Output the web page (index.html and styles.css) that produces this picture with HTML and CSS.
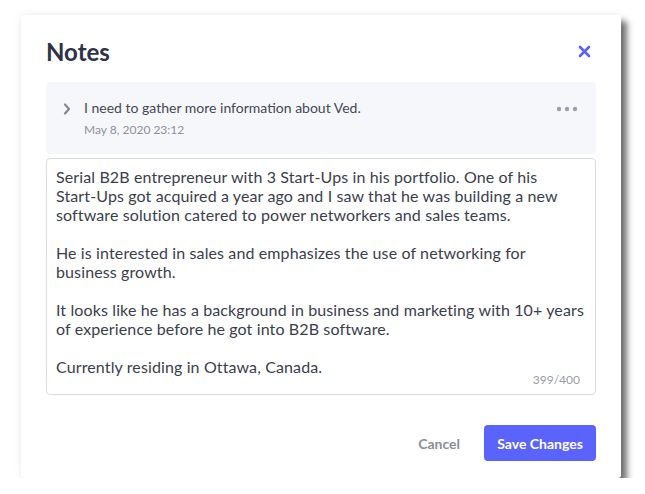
FILE: index.html
```html
<!DOCTYPE html>
<html lang="en">
<head>
    <meta charset="UTF-8">
    <title>Notes</title>
    <link rel="stylesheet" href="styles.css">
</head>
<body>

    <div class="modal">
        <div class="modal-head">
            <h1>Notes</h1>
            <button class="close" aria-label="Close">
                <svg width="13" height="13" viewBox="0 0 13 13">
                    <path d="M2 2L11 11M11 2L2 11" stroke="currentColor" stroke-width="2.6" stroke-linecap="round"/>
                </svg>
            </button>
        </div>

        <div class="note">
            <svg class="chevron" width="8" height="12" viewBox="0 0 8 12">
                <path d="M2 1.5L6 6L2 10.5" fill="none" stroke="currentColor" stroke-width="2.2" stroke-linecap="round" stroke-linejoin="round"/>
            </svg>
            <div class="note-body">
                <div class="note-title">I need to gather more information about Ved.</div>
                <div class="note-date">May 8, 2020 23:12</div>
            </div>
            <svg class="more" width="22" height="6" viewBox="0 0 22 6">
                <circle cx="3" cy="3" r="2.2" fill="currentColor"/>
                <circle cx="11" cy="3" r="2.2" fill="currentColor"/>
                <circle cx="19" cy="3" r="2.2" fill="currentColor"/>
            </svg>
        </div>

        <div class="editor">
            <textarea wrap="off" maxlength="400">Serial B2B entrepreneur with 3 Start-Ups in his portfolio. One of his
Start-Ups got acquired a year ago and I saw that he was building a new
software solution catered to power networkers and sales teams.

He is interested in sales and emphasizes the use of networking for
business growth.

It looks like he has a background in business and marketing with 10+ years
of experience before he got into B2B software.

Currently residing in Ottawa, Canada.</textarea>
            <span class="count">399/400</span>
        </div>

        <div class="actions">
            <button class="btn-cancel">Cancel</button>
            <button class="btn-save">Save Changes</button>
        </div>
    </div>

</body>
</html>
```

FILE: styles.css
```css
body {
    margin: 0;
    padding: 15px 0 0 21px;
    background: #fff;
    font-family: Lato, "Noto Sans", sans-serif;
    color: #3b3e4c;
}

.modal {
    width: 600px;
    height: 463px;
    box-sizing: border-box;
    padding: 0 25px 0 25px;
    background: #fff;
    border-radius: 3px;
    box-shadow:
        6px 6px 6px rgba(0, 0, 0, 0.55),
        0 0 8px rgba(0, 0, 0, 0.08);
    display: flex;
    flex-direction: column;
}

.modal-head {
    height: 67px;
    display: flex;
    align-items: center;
    justify-content: space-between;
    padding-top: 6px;
    box-sizing: border-box;
}
.modal-head h1 {
    margin: 0;
    font-size: 24px;
    font-weight: 700;
    color: #2e3148;
}
.close {
    border: 0;
    background: none;
    padding: 0;
    margin-right: 5px;
    color: #5a62f6;
    display: flex;
}

.note {
    background: #f6f7fa;
    border-radius: 4px;
    height: 72px;
    box-sizing: border-box;
    padding: 16px 18px 0 17px;
    display: flex;
    align-items: flex-start;
}
.chevron {
    color: #858894;
    margin-top: 5px;
    margin-right: 13px;
}
.note-body {
    flex: 1;
}
.note-title {
    font-size: 14px;
    line-height: 20px;
    color: #454857;
}
.note-date {
    margin-top: 3px;
    font-size: 12px;
    line-height: 18px;
    color: #8d909c;
}
.more {
    color: #9c9fa9;
    margin-top: 8px;
}

.editor {
    position: relative;
    margin-top: 4px;
    height: 237px;
    border: 1.5px solid #d9dce5;
    border-radius: 4px;
    box-sizing: border-box;
}
.editor textarea {
    display: block;
    width: 100%;
    height: 100%;
    box-sizing: border-box;
    border: 0;
    padding: 8px 9px;
    resize: none;
    overflow: hidden;
    background: transparent;
    font-family: Lato, "Noto Sans", sans-serif;
    font-size: 16px;
    letter-spacing: 0.12px;
    line-height: 19px;
    color: #3b3e4c;
    outline: none;
}
.count {
    position: absolute;
    right: 15px;
    bottom: 7px;
    font-size: 12px;
    color: #9a9da7;
}

.actions {
    margin-top: 30px;
    display: flex;
    justify-content: flex-end;
    align-items: center;
    gap: 18px;
}
.actions button {
    border: 0;
    font-family: Lato, "Noto Sans", sans-serif;
    font-size: 14px;
    font-weight: 700;
    cursor: pointer;
}
.btn-cancel {
    background: none;
    color: #8b8e99;
    padding: 0 6px;
}
.btn-save {
    background: #5b63fd;
    color: #fff;
    height: 36px;
    padding: 0 10px;
    border-radius: 4px;
    width: 112px;
}
```
